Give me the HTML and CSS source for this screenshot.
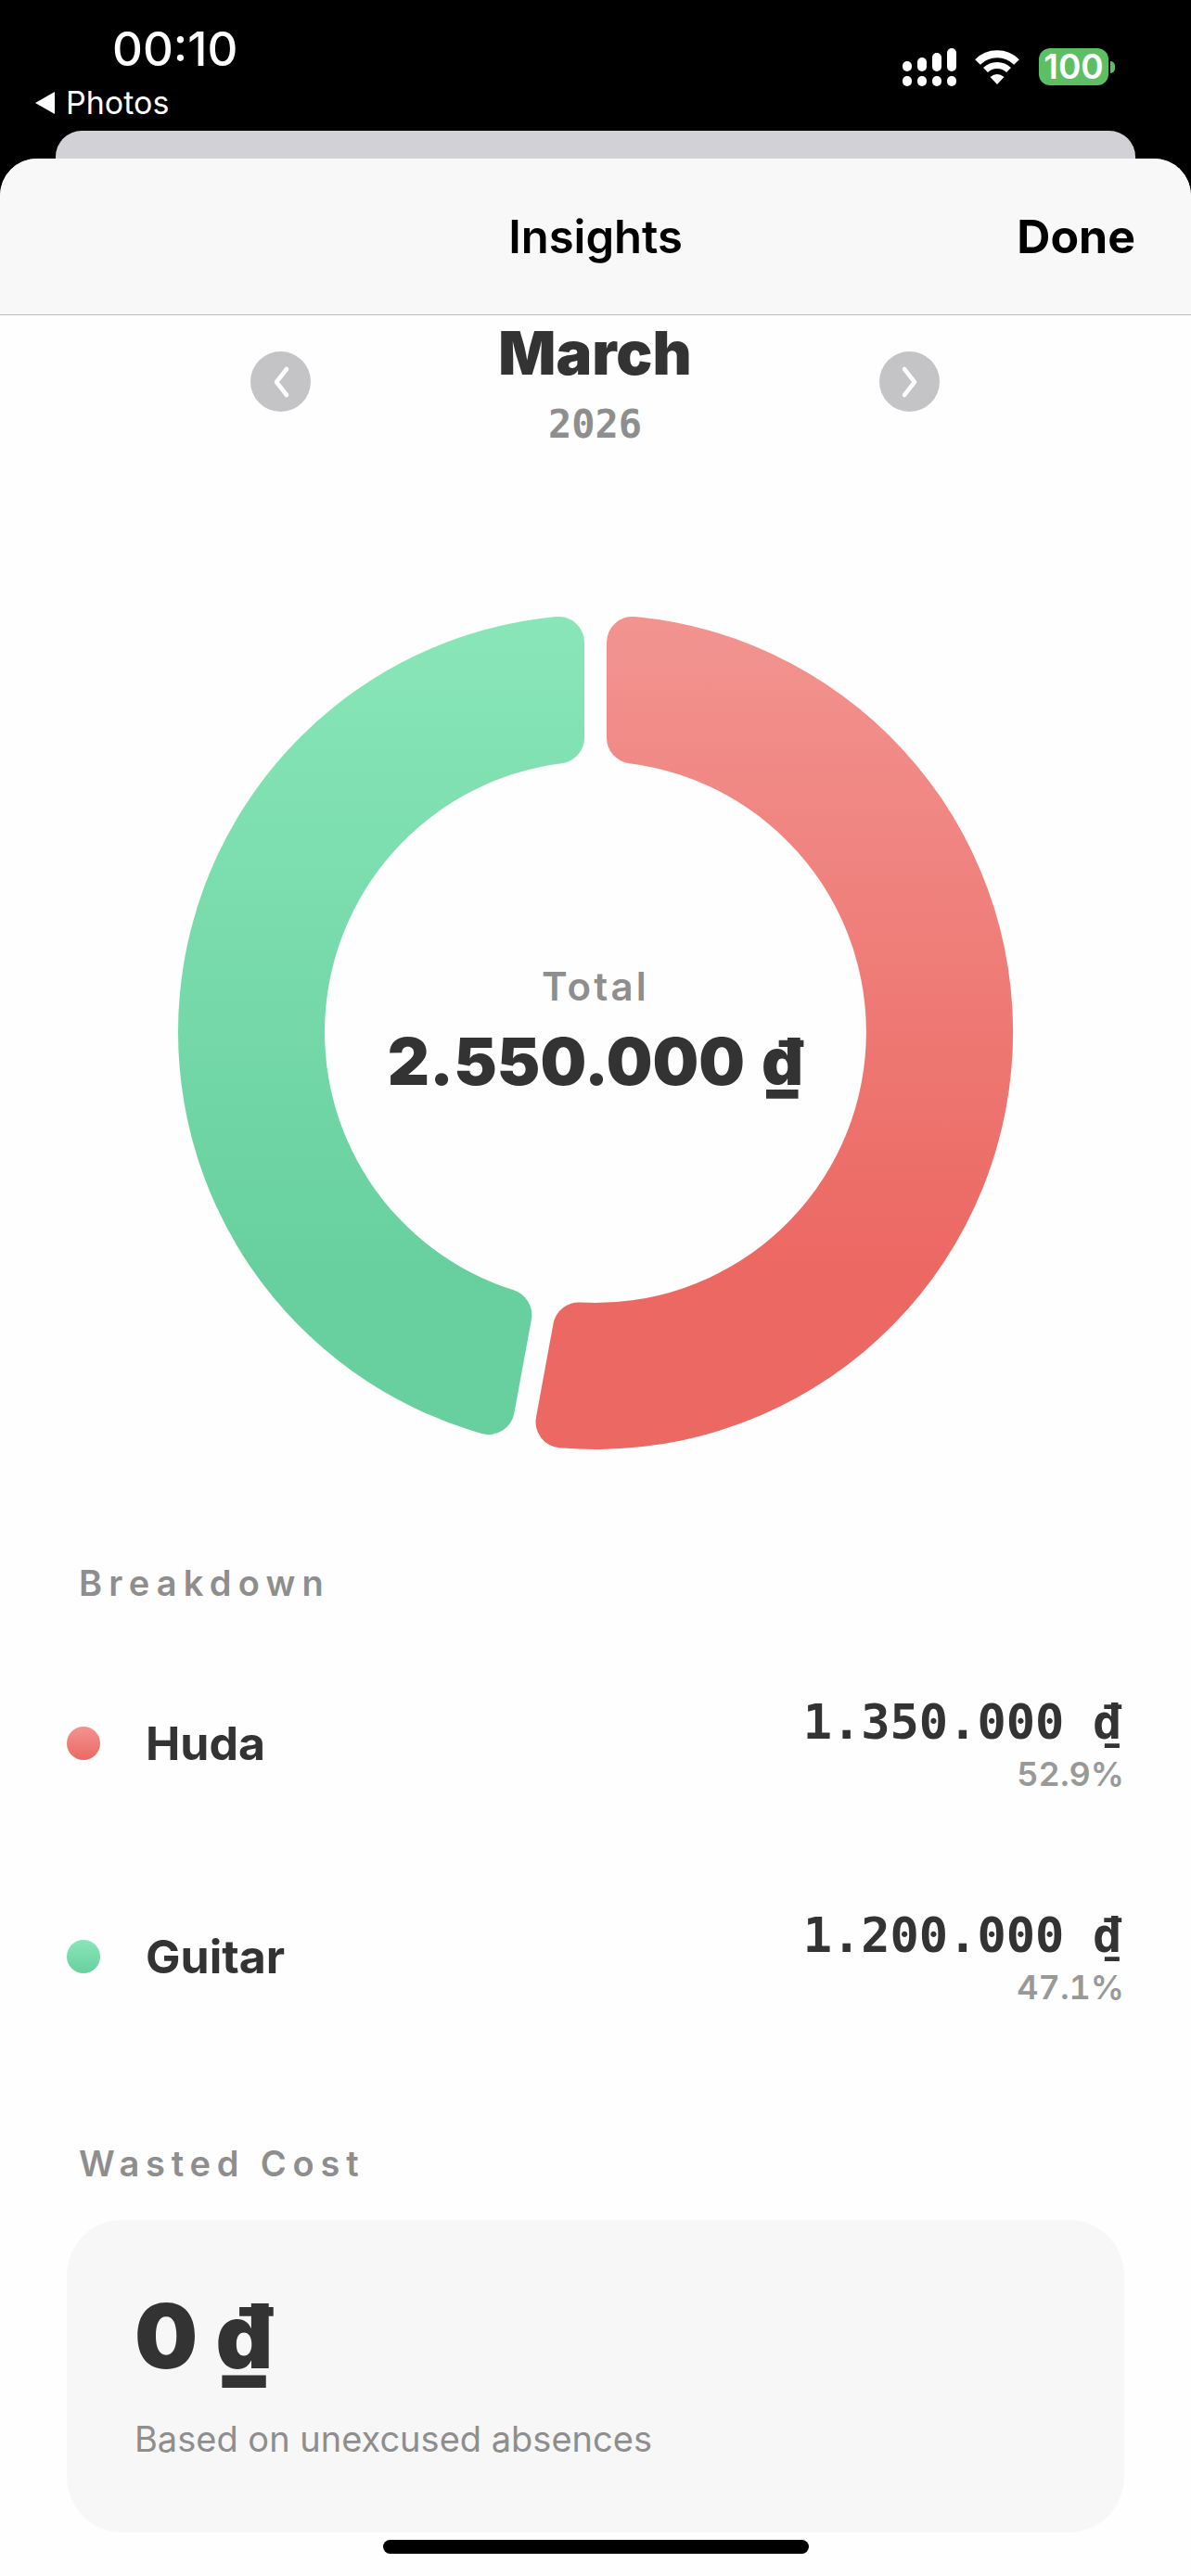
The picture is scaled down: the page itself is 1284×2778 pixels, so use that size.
FILE: index.html
```html
<!DOCTYPE html>
<html lang="en">
<head>
  <meta charset="UTF-8">
  <meta name="viewport" content="width=device-width, initial-scale=1.0">
  <title>Insights</title>
  <link rel="stylesheet" href="styles.css">
</head>
<body>
  <div class="status">
    <div class="status-left">
      <div class="time">00:10</div>
      <div class="back"><span class="back-arrow"></span>Photos</div>
    </div>
    <div class="status-right">
      <div class="signal">
        <span class="bar bar1"></span><span class="bar bar2"></span><span class="bar bar3"></span><span class="bar bar4"></span>
        <span class="pip"></span><span class="pip"></span><span class="pip"></span><span class="pip"></span>
      </div>
      <svg class="wifi" width="50" height="37" viewBox="0 0 50 37">
        <path d="M4 13A29.7 29.7 0 0 1 46 13" fill="none" stroke="#fff" stroke-width="8"/>
        <path d="M12.5 21.5A17.9 17.9 0 0 1 37.5 21.5" fill="none" stroke="#fff" stroke-width="7"/>
        <path d="M25 37L17.5 29Q25 23 32.5 29Z" fill="#fff"/>
      </svg>
      <div class="battery">100</div>
      <div class="battery-nub"></div>
    </div>
  </div>
  <div class="peek"></div>

  <div class="sheet">
    <div class="navbar">
      <div class="nav-title">Insights</div>
      <div class="nav-done">Done</div>
    </div>

    <div class="month-row">
      <div class="arrow">
        <svg width="24" height="36" viewBox="0 0 24 36"><path d="M18 4L7 18L18 32" fill="none" stroke="#fff" stroke-width="4.5" stroke-linecap="round" stroke-linejoin="round"/></svg>
      </div>
      <div class="month">
        <div class="month-name">March</div>
        <div class="month-year">2026</div>
      </div>
      <div class="arrow">
        <svg width="24" height="36" viewBox="0 0 24 36"><path d="M6 4L17 18L6 32" fill="none" stroke="#fff" stroke-width="4.5" stroke-linecap="round" stroke-linejoin="round"/></svg>
      </div>
    </div>

    <div class="donut">
      <svg width="904" height="904" viewBox="-452 -452 904 904">
        <defs>
          <linearGradient id="redGrad" gradientUnits="userSpaceOnUse" x1="0" y1="-450" x2="0" y2="250">
            <stop offset="0" stop-color="#f29490"/>
            <stop offset="1" stop-color="#ec6863"/>
          </linearGradient>
          <linearGradient id="greenGrad" gradientUnits="userSpaceOnUse" x1="0" y1="-450" x2="0" y2="250">
            <stop offset="0" stop-color="#89e6b9"/>
            <stop offset="1" stop-color="#68d09f"/>
          </linearGradient>
        </defs>
        <path fill="url(#redGrad)" d="M42.65 -447.97A450 450 0 0 1 -38.91 448.32A28 28 0 0 1 -64.03 415.38L-45.51 314.46A28 28 0 0 1 -16.39 291.54A292 292 0 0 0 36.5 -289.7A28 28 0 0 1 12 -317.5L12 -420.1A28 28 0 0 1 42.65 -447.97Z"/>
        <path fill="url(#greenGrad)" d="M-122.81 432.92A450 450 0 0 1 -42.65 -447.97A28 28 0 0 1 -12 -420.1L-12 -317.5A28 28 0 0 1 -36.5 -289.7A292 292 0 0 0 -88.19 278.36A28 28 0 0 1 -69.11 310.12L-87.63 411.04A28 28 0 0 1 -122.81 432.92Z"/>
      </svg>
      <div class="donut-center">
        <div class="total-label">Total</div>
        <div class="total-value">2.550.000 ₫</div>
      </div>
    </div>

    <div class="section-label breakdown-label">Breakdown</div>

    <div class="row">
      <div class="row-name"><span class="dot dot-red"></span>Huda</div>
      <div class="row-values">
        <div class="row-amount">1.350.000 ₫</div>
        <div class="row-percent">52.9%</div>
      </div>
    </div>
    <div class="row">
      <div class="row-name"><span class="dot dot-green"></span>Guitar</div>
      <div class="row-values">
        <div class="row-amount">1.200.000 ₫</div>
        <div class="row-percent">47.1%</div>
      </div>
    </div>

    <div class="section-label wasted-label">Wasted Cost</div>

    <div class="card">
      <div class="card-value">0 ₫</div>
      <div class="card-note">Based on unexcused absences</div>
    </div>
  </div>

  <div class="home-bar"></div>
</body>
</html>
```

FILE: styles.css
```css
* {
  box-sizing: border-box;
}
html, body {
  margin: 0;
  height: 2778px;
}
body {
  position: relative;
  overflow: hidden;
  background: #000;
  font-family: Inter, "Liberation Sans", sans-serif;
  color: #333;
}

/* status bar */
.status {
  height: 141px;
  display: flex;
  justify-content: space-between;
  color: #fff;
}
.status-left {
  padding: 23px 0 0 38px;
}
.time {
  margin-left: 83px;
  font-size: 51px;
  line-height: 60px;
  font-weight: 500;
}
.back {
  display: flex;
  align-items: center;
  gap: 12px;
  margin-top: 8px;
  font-size: 34px;
  line-height: 40px;
}
.back-arrow {
  width: 0;
  height: 0;
  border-top: 12px solid transparent;
  border-bottom: 12px solid transparent;
  border-right: 21px solid #fff;
}
.status-right {
  display: flex;
  align-items: flex-start;
  padding: 52px 82px 0 0;
}
.signal {
  display: grid;
  grid-template-columns: repeat(4, 10px);
  grid-template-rows: 25px 11px;
  column-gap: 6px;
  row-gap: 5px;
  align-items: end;
}
.bar, .pip {
  background: #fff;
  border-radius: 5px;
}
.pip {
  height: 11px;
}
.bar1 { height: 11px; }
.bar2 { height: 15px; }
.bar3 { height: 20px; }
.bar4 { height: 25px; }
.wifi {
  margin: 2px 20px 0 19px;
}
.battery {
  width: 75px;
  height: 40px;
  background: #5cbf63;
  border-radius: 12px;
  text-align: center;
  font-size: 37px;
  line-height: 40px;
  font-weight: 600;
}
.battery-nub {
  width: 5px;
  height: 13px;
  margin: 14px 0 0 2px;
  background: #5cbf63;
  border-radius: 0 6px 6px 0;
}
.peek {
  height: 30px;
  margin: 0 60px;
  background: #d2d2d6;
  border-radius: 28px 28px 0 0;
}

/* sheet */
.sheet {
  height: 2607px;
  background: #fefefe;
  border-radius: 40px 40px 0 0;
  overflow: hidden;
}
.navbar {
  height: 169px;
  padding: 0 60px;
  display: flex;
  align-items: center;
  justify-content: flex-end;
  position: relative;
  background: #f8f8f8;
  border-bottom: 1px solid #bdbdbd;
  color: #000;
}
.nav-title {
  position: absolute;
  left: 0;
  right: 0;
  text-align: center;
  font-size: 49px;
  font-weight: 600;
}
.nav-done {
  font-size: 50px;
  font-weight: 700;
}

.month-row {
  display: flex;
  justify-content: space-between;
  align-items: flex-start;
  padding: 0 271px 0 270px;
  height: 321px;
}
.arrow {
  width: 65px;
  height: 65px;
  margin-top: 39px;
  border-radius: 50%;
  background: #c4c4c6;
  display: flex;
  align-items: center;
  justify-content: center;
}
.month {
  text-align: center;
}
.month-name {
  margin-top: 1px;
  font-size: 65px;
  line-height: 80px;
  font-weight: 900;
}
.month-year {
  margin-top: 12px;
  font-family: "DejaVu Sans Mono", monospace;
  font-size: 42px;
  line-height: 50px;
  font-weight: 700;
  color: #8e8e8e;
}

.donut {
  display: grid;
  justify-content: center;
  align-items: center;
  justify-items: center;
  height: 904px;
}
.donut > * {
  grid-area: 1 / 1;
}
.donut-center {
  padding-top: 2px;
  text-align: center;
}
.total-label {
  font-size: 42px;
  line-height: 50px;
  font-weight: 600;
  letter-spacing: 3.2px;
  color: #8e8e8e;
}
.total-value {
  margin-top: 12px;
  font-size: 70px;
  line-height: 88px;
  font-weight: 900;
  word-spacing: 4px;
}

.section-label {
  padding-left: 85px;
  font-size: 38px;
  line-height: 44px;
  font-weight: 600;
  color: #8e8e8e;
}
.breakdown-label {
  margin-top: 120px;
  letter-spacing: 7.2px;
}
.wasted-label {
  margin-top: 86px;
  letter-spacing: 6.8px;
}

.row {
  height: 230px;
  margin-top: 0;
  padding: 0 74px 0 72px;
  display: flex;
  justify-content: space-between;
  align-items: center;
}
.breakdown-label + .row {
  margin-top: 36px;
}
.row-name {
  display: flex;
  align-items: center;
  gap: 49px;
  font-size: 50px;
  font-weight: 700;
}
.dot {
  width: 36px;
  height: 36px;
  border-radius: 50%;
}
.dot-red {
  background: linear-gradient(to bottom, #f29490, #ec6863);
}
.dot-green {
  background: linear-gradient(to bottom, #89e6b9, #68d09f);
}
.row-values {
  text-align: right;
}
.row-amount {
  font-family: "DejaVu Sans Mono", monospace;
  font-size: 52px;
  line-height: 62px;
  font-weight: 700;
}
.row-percent {
  margin: 4px -2px 0 0;
  font-size: 36px;
  line-height: 42px;
  font-weight: 600;
  font-feature-settings: "tnum";
  color: #999;
}

.card {
  height: 337px;
  margin: 39px 72px 0;
  padding: 67px 73px 0;
  background: #f7f7f7;
  border-radius: 60px;
}
.card-value {
  font-size: 96px;
  line-height: 116px;
  font-weight: 900;
}
.card-note {
  margin-top: 30px;
  font-size: 38px;
  line-height: 46px;
  color: #8e8e8e;
}

.home-bar {
  position: absolute;
  left: 413px;
  top: 2739px;
  width: 459px;
  height: 15px;
  background: #000;
  border-radius: 8px;
}
```
